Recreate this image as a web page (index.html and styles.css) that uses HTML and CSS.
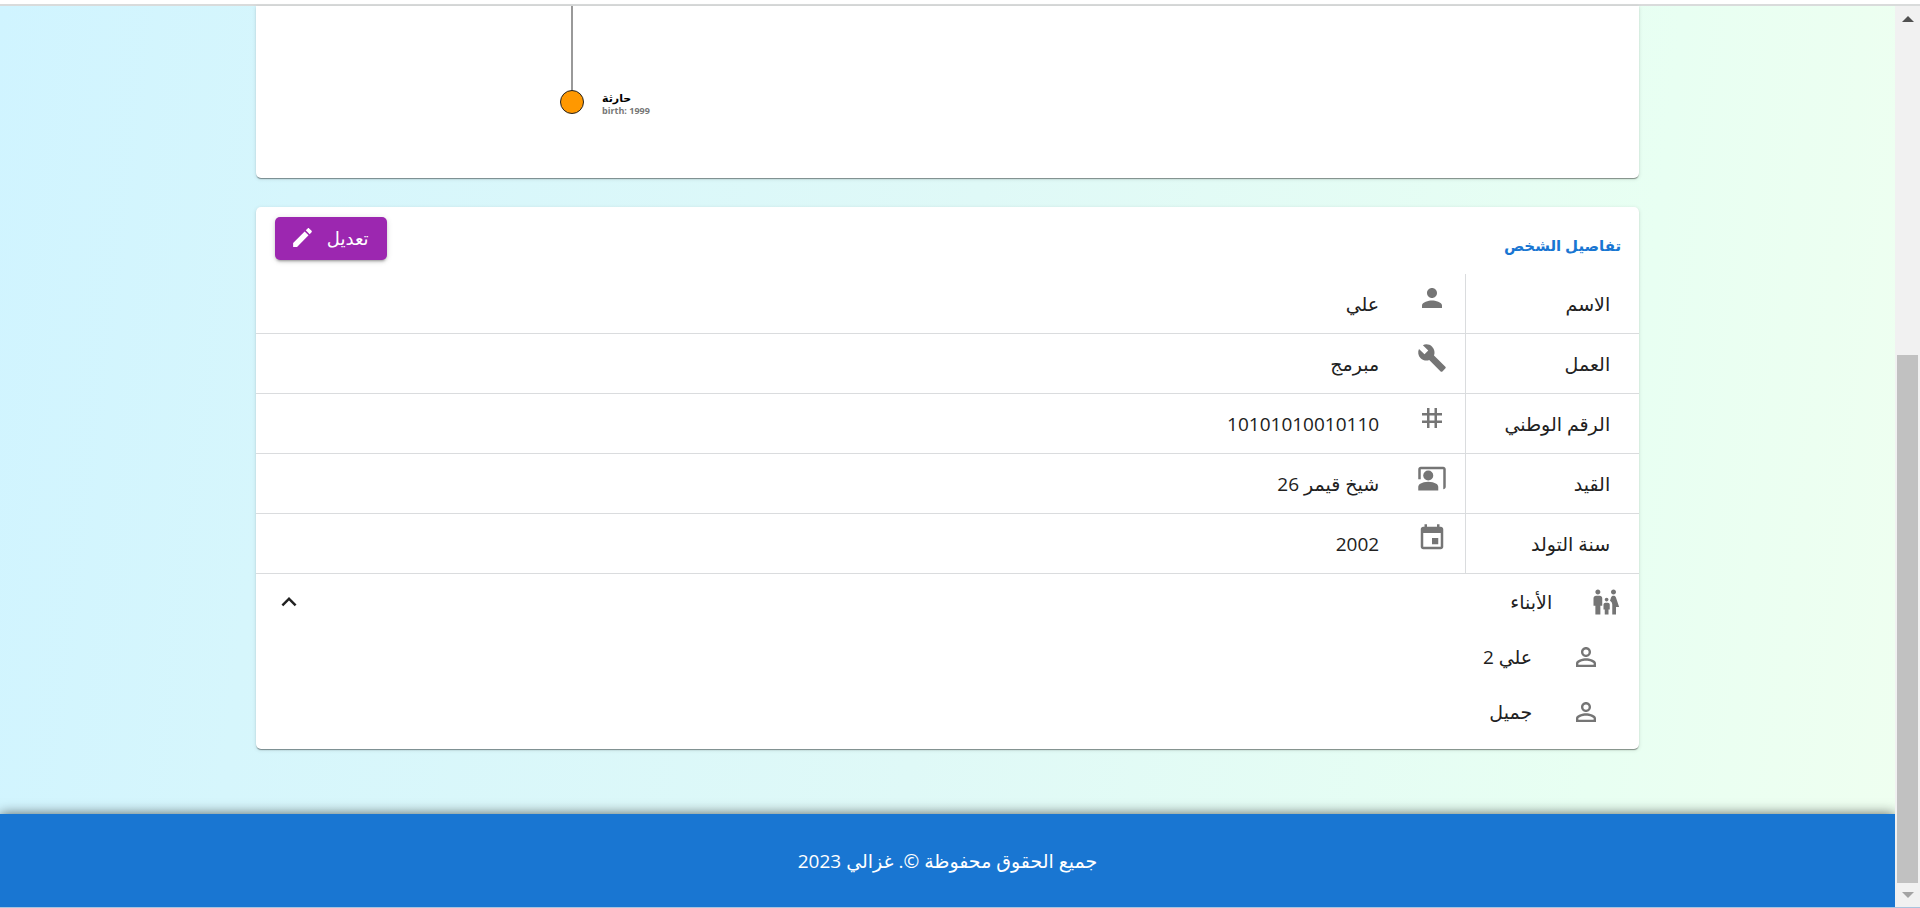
FILE: index.html
```html
<!DOCTYPE html>
<html lang="ar" dir="rtl">
<head>
<meta charset="utf-8">
<title>تفاصيل الشخص</title>
<link rel="stylesheet" href="styles.css">
</head>
<body>
<div class="frame">
  <div class="page">
    <main class="content">
      <section class="card tree">
        <svg class="tree-svg" width="440" height="172" aria-label="شجرة العائلة">
          <path d="M316 0V85" stroke="#777" stroke-width="1.5"/>
          <circle cx="316" cy="96" r="11.5" fill="#ff9800" stroke="#222"/>
          <text class="node-name" x="346" y="96">حارثة</text>
          <text class="node-birth" x="346" y="108">birth: 1999</text>
        </svg>
      </section>
      <section class="card details">
        <header class="details-head">
          <h2 class="title">تفاصيل الشخص</h2>
          <button class="edit" type="button">
            <span>تعديل</span>
            <svg class="edit-icon" viewBox="0 0 24 24"><path d="M3 17.25V21h3.750L17.810 9.940l-3.750-3.750L3 17.250zM20.710 7.040c.39-.39.39-1.020 0-1.410l-2.340-2.340c-.39-.39-1.020-.39-1.410 0l-1.830 1.830 3.750 3.750 1.830-1.830z"/></svg>
          </button>
        </header>
        <table class="info">
          <tbody>
            <tr><th scope="row">الاسم</th><td><div class="value"><svg class="icon" viewBox="0 0 24 24"><path d="M12 12c2.210 0 4-1.790 4-4s-1.790-4-4-4-4 1.790-4 4 1.790 4 4 4zm0 2c-2.670 0-8 1.340-8 4v2h16v-2c0-2.660-5.330-4-8-4z"/></svg><span>علي</span></div></td></tr>
            <tr><th scope="row">العمل</th><td><div class="value"><svg class="icon" viewBox="0 0 24 24"><path d="m22.700 19-9.100-9.100c.9-2.300.4-5-1.500-6.900-2-2-5-2.400-7.400-1.300L9 6 6 9 1.600 4.700C.4 7.100.9 10.100 2.900 12.100c1.900 1.900 4.600 2.400 6.900 1.500l9.100 9.100c.4.4 1 .4 1.400 0l2.300-2.300c.5-.4.5-1.100.1-1.400z"/></svg><span>مبرمج</span></div></td></tr>
            <tr><th scope="row">الرقم الوطني</th><td><div class="value"><svg class="icon" viewBox="0 0 24 24"><path d="M20 10V8h-4V4h-2v4h-4V4H8v4H4v2h4v4H4v2h4v4h2v-4h4v4h2v-4h4v-2h-4v-4h4zm-6 4h-4v-4h4v4z"/></svg><span>10101010010110</span></div></td></tr>
            <tr><th scope="row">القيد</th><td><div class="value"><svg class="icon" viewBox="0 0 24 24"><path d="M21 3H3c-1.110 0-2 .89-2 2v8h2V5h18v16c1.100 0 2-.9 2-2V5c0-1.110-.9-2-2-2z"/><circle cx="9" cy="10" r="4"/><path d="M15.390 16.560C13.710 15.700 11.530 15 9 15s-4.710.7-6.390 1.560C1.610 17.070 1 18.100 1 19.220V22h16v-2.780c0-1.120-.61-2.150-1.610-2.660z"/></svg><span>شيخ قيمر 26</span></div></td></tr>
            <tr><th scope="row">سنة التولد</th><td><div class="value"><svg class="icon" viewBox="0 0 24 24"><path d="M17 12h-5v5h5v-5zM16 1v2H8V1H6v2H5c-1.110 0-1.990.9-1.990 2L3 19c0 1.100.89 2 2 2h14c1.100 0 2-.9 2-2V5c0-1.100-.9-2-2-2h-1V1h-2zm3 18H5V8h14v11z"/></svg><span>2002</span></div></td></tr>
          </tbody>
        </table>
        <button class="item toggle" type="button" aria-expanded="true">
          <svg class="icon" viewBox="0 0 24 24"><path d="M16 4c0-1.110.89-2 2-2s2 .89 2 2-.89 2-2 2-2-.89-2-2zm4 18v-6h2.500l-2.540-7.630C19.680 7.550 18.920 7 18.060 7h-.12c-.86 0-1.630.55-1.900 1.370l-.86 2.580c1.080.6 1.820 1.730 1.820 3.050v8h3zm-7.500-10.500c.83 0 1.500-.67 1.500-1.500s-.67-1.500-1.500-1.500S11 9.170 11 10s.67 1.500 1.500 1.500zM5.500 6c1.110 0 2-.89 2-2s-.89-2-2-2-2 .89-2 2 .89 2 2 2zm2 16v-7H9V9c0-1.100-.9-2-2-2H4c-1.100 0-2 .9-2 2v6h1.500v7h4zm6.500 0v-4h1v-4c0-.82-.68-1.500-1.500-1.500h-2c-.82 0-1.500.68-1.500 1.500v4h1v4h3z"/></svg>
          <span class="item-text">الأبناء</span>
          <svg class="chevron" viewBox="0 0 24 24"><path d="m12 8-6 6 1.410 1.410L12 10.830l4.590 4.580L18 14z"/></svg>
        </button>
        <ul class="children">
          <li class="item child"><svg class="icon" viewBox="0 0 24 24"><path d="M12 5.900a2.100 2.100 0 1 1 0 4.200 2.100 2.100 0 0 1 0-4.200m0 9c2.970 0 6.100 1.460 6.100 2.100v1.100H5.900V17c0-.64 3.130-2.100 6.100-2.100M12 4C9.790 4 8 5.790 8 8s1.790 4 4 4 4-1.790 4-4-1.790-4-4-4zm0 9c-2.670 0-8 1.340-8 4v3h16v-3c0-2.660-5.330-4-8-4z"/></svg><span>علي 2</span></li>
          <li class="item child"><svg class="icon" viewBox="0 0 24 24"><path d="M12 5.900a2.100 2.100 0 1 1 0 4.200 2.100 2.100 0 0 1 0-4.200m0 9c2.970 0 6.100 1.460 6.100 2.100v1.100H5.900V17c0-.64 3.130-2.100 6.100-2.100M12 4C9.790 4 8 5.790 8 8s1.790 4 4 4 4-1.790 4-4-1.790-4-4-4zm0 9c-2.670 0-8 1.340-8 4v3h16v-3c0-2.660-5.330-4-8-4z"/></svg><span>جميل</span></li>
        </ul>
      </section>
    </main>
    <footer class="footer">جميع الحقوق محفوظة ©. غزالي 2023</footer>
  </div>
  <div class="scrollbar" aria-hidden="true">
    <svg class="arrow" viewBox="0 0 12 6"><path d="M0 6 6 0l6 6z" fill="#505050"/></svg>
    <div class="track"><div class="thumb"></div></div>
    <svg class="arrow" viewBox="0 0 12 6"><path d="M0 0l6 6 6-6z" fill="#a3a3a3"/></svg>
  </div>
</div>
</body>
</html>
```
FILE: styles.css
```css
* { box-sizing: border-box; }
body {
  margin: 0;
  font-family: "Open Sans", "DejaVu Sans", sans-serif;
  font-size: 19px;
  line-height: 28px;
  color: #212121;
  background: #fff;
}
.frame {
  display: flex;
  direction: ltr;
  min-height: 100vh;
  padding-top: 4px;
  background: #fff;
  border-bottom: 1px solid #a9c4de;
}
.page {
  flex: 1;
  display: flex;
  flex-direction: column;
  direction: rtl;
  border-top: 2px solid #d9dbdb;
  background: linear-gradient(97deg, #d0f4ff 0%, #d6f6fc 16%, #dff9f7 50%, #e8fff2 84%, #effff0 100%);
}
.content {
  width: 73%;
  margin: 0 auto;
  flex: 1;
  display: flex;
  flex-direction: column;
  gap: 29px;
  padding-bottom: 64px;
}
.card {
  background: #fff;
  border-radius: 5px;
  box-shadow: 0 2px 1px -1px rgba(0, 0, 0, .25), 0 1px 1px rgba(0, 0, 0, .2), 0 1px 4px rgba(0, 0, 0, .12);
}
.tree {
  direction: ltr;
  border-radius: 0 0 5px 5px;
}
.tree-svg { display: block; }
.node-name { font-size: 11px; font-weight: 700; fill: #000; }
.node-birth { font-size: 9px; font-weight: 700; fill: #777; }
.details { padding-bottom: 10px; }
.details-head {
  display: flex;
  justify-content: space-between;
  align-items: flex-start;
  padding: 10px 18px 14px 19px;
}
.title {
  margin: 14px 0 0;
  font-size: 15px;
  line-height: 28px;
  font-weight: 700;
  color: #1976d2;
}
.edit {
  display: flex;
  align-items: center;
  gap: 12px;
  height: 43px;
  padding: 0 18px 2px 15px;
  border: 0;
  border-radius: 5px;
  background: #9c27b0;
  color: #fff;
  font-family: inherit;
  font-size: 18px;
  box-shadow: 0 3px 2px -2px rgba(0, 0, 0, .2), 0 2px 3px rgba(0, 0, 0, .14), 0 1px 6px rgba(0, 0, 0, .12);
}
.edit-icon { width: 25px; height: 25px; fill: #fff; }
.info {
  width: 100%;
  border-collapse: separate;
  border-spacing: 0;
}
.info th, .info td {
  height: 60px;
  padding: 0 29px;
  border-bottom: 1px solid #dadcde;
  text-align: right;
  font-weight: 400;
}
.info th {
  width: 174px;
  border-left: 1px solid #dadcde;
  white-space: nowrap;
}
.info td {
  padding: 9px 18px 0;
  vertical-align: top;
}
.value {
  display: flex;
  align-items: flex-start;
  gap: 38px;
}
.value span { padding-top: 7px; }
.icon {
  width: 30px;
  height: 30px;
  flex: none;
  fill: #757575;
}
.item {
  display: flex;
  align-items: center;
  width: 100%;
  height: 55px;
  padding: 0 18px;
  gap: 39px;
}
.toggle {
  border: 0;
  background: none;
  color: inherit;
  font-family: inherit;
  font-size: inherit;
  text-align: right;
}
.item-text { flex: 1; }
.chevron { width: 30px; height: 30px; fill: #212121; }
.children { margin: 0; padding: 0; list-style: none; }
.child { padding: 0 38px; }
.footer {
  height: 93px;
  display: flex;
  align-items: center;
  justify-content: center;
  background: #1976d2;
  color: #fff;
  box-shadow: 0 0 12px rgba(0, 0, 0, .6);
  clip-path: inset(-16px 0 0 0);
}
.scrollbar {
  width: 25px;
  display: flex;
  flex-direction: column;
  align-items: center;
  gap: 9px;
  padding: 10px 0 9px;
  border-top: 2px solid #d9dbdb;
  background: #f1f1f1;
}
.arrow { width: 12px; height: 6px; }
.track {
  flex: 1;
  display: flex;
  align-items: flex-end;
}
.thumb { width: 21px; height: 62%; background: #c1c1c1; }
```
